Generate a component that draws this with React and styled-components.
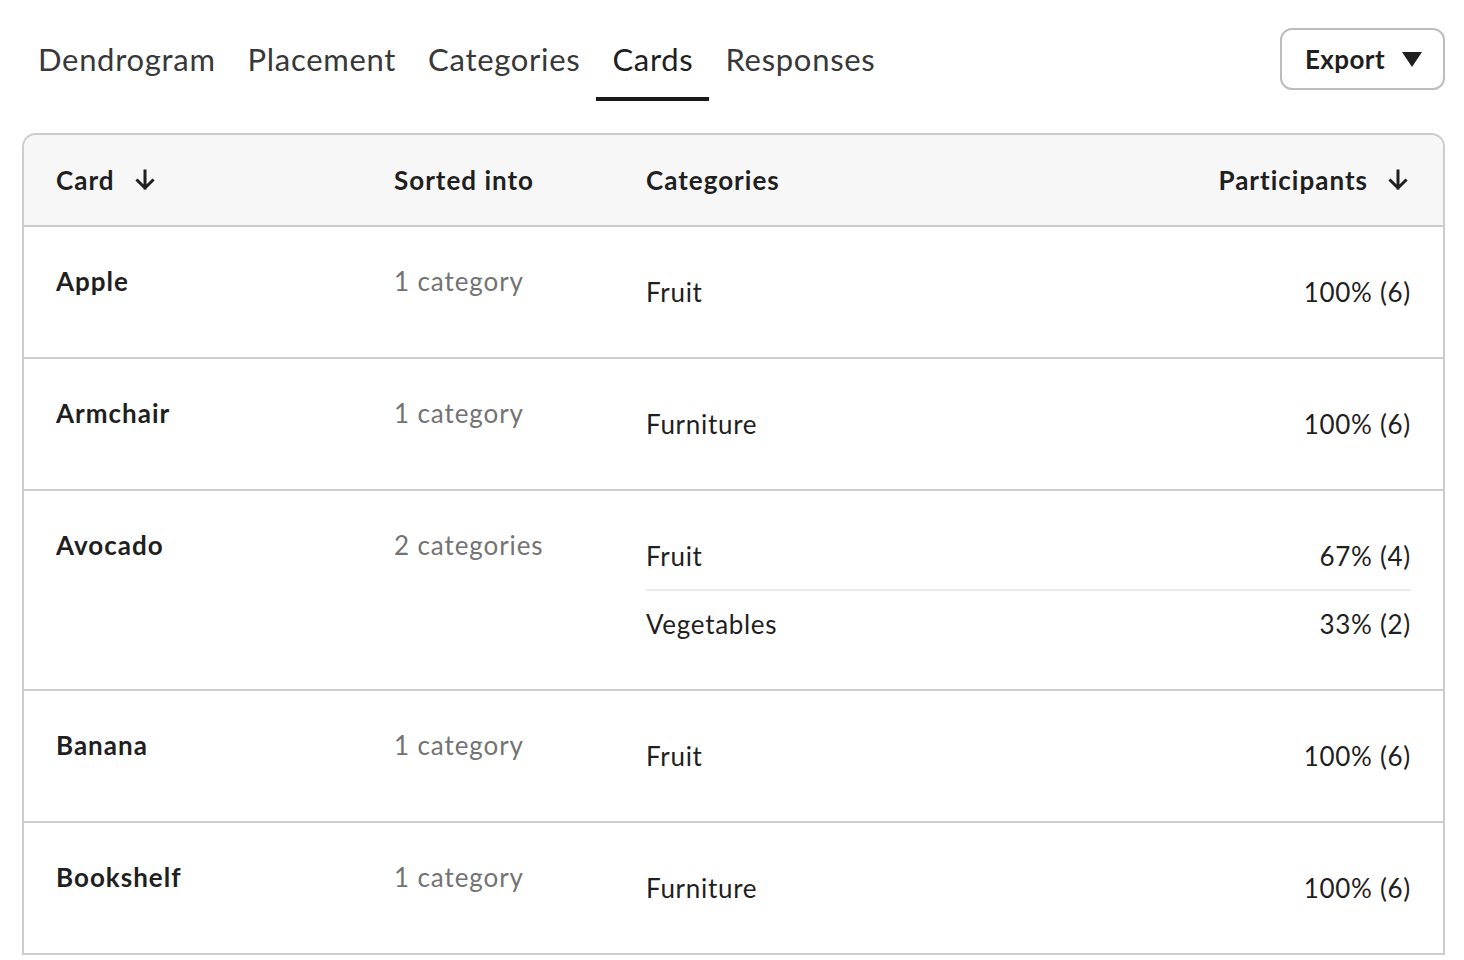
import React from "react";
import styled, { createGlobalStyle } from "styled-components";

const GlobalStyle = createGlobalStyle`
  body {
    margin: 0;
    background: #ffffff;
    font-family: "Lato", "Open Sans", sans-serif;
    color: #1f1f1f;
  }
`;

const tabs = ["Dendrogram", "Placement", "Categories", "Cards", "Responses"];

const cards = [
  { name: "Apple", sorted: "1 category", cats: [["Fruit", "100% (6)"]] },
  { name: "Armchair", sorted: "1 category", cats: [["Furniture", "100% (6)"]] },
  {
    name: "Avocado",
    sorted: "2 categories",
    cats: [
      ["Fruit", "67% (4)"],
      ["Vegetables", "33% (2)"],
    ],
  },
  { name: "Banana", sorted: "1 category", cats: [["Fruit", "100% (6)"]] },
  { name: "Bookshelf", sorted: "1 category", cats: [["Furniture", "100% (6)"]] },
];

function SortArrow() {
  return (
    <svg width="20" height="22" viewBox="0 0 20 22" fill="none">
      <path
        d="M10 2v17M2.5 11.5L10 19l7.5-7.5"
        stroke="#1f1f1f"
        strokeWidth="3"
        strokeLinecap="square"
      />
    </svg>
  );
}

export default function App() {
  return (
    <Page>
      <GlobalStyle />
      <TopBar>
        <Tabs>
          {tabs.map((t) => (
            <Tab key={t} active={t === "Cards"}>
              {t}
            </Tab>
          ))}
        </Tabs>
        <ExportButton>
          Export
          <svg width="20" height="15" viewBox="0 0 20 15">
            <path d="M0 0h20L10 15z" fill="#1f1f1f" />
          </svg>
        </ExportButton>
      </TopBar>

      <TableCard>
        <HeaderRow>
          <HeadCell>
            Card <SortArrow />
          </HeadCell>
          <HeadCell>Sorted into</HeadCell>
          <HeadSplit>
            <HeadCell>Categories</HeadCell>
            <HeadCell trail>
              Participants <SortArrow />
            </HeadCell>
          </HeadSplit>
        </HeaderRow>
        {cards.map((c) => (
          <Row key={c.name}>
            <Name>{c.name}</Name>
            <Sorted>{c.sorted}</Sorted>
            <CatList>
              {c.cats.map(([cat, pct]) => (
                <CatItem key={cat}>
                  <span>{cat}</span>
                  <span>{pct}</span>
                </CatItem>
              ))}
            </CatList>
          </Row>
        ))}
      </TableCard>
    </Page>
  );
}

const Page = styled.div`
  padding: 0 19px 0 22px;
`;

const TopBar = styled.div`
  display: flex;
  justify-content: space-between;
  align-items: flex-start;
`;

const Tabs = styled.div`
  display: flex;
`;

const Tab = styled.div`
  padding: 39px 16px 18px;
  line-height: 40px;
  font-size: 31px;
  letter-spacing: 0.7px;
  color: ${({ active }) => (active ? "#1f1f1f" : "#383838")};
  border-bottom: 4px solid ${({ active }) => (active ? "#1a1a1a" : "transparent")};
`;

const ExportButton = styled.button`
  margin-top: 28px;
  height: 62px;
  width: 165px;
  display: flex;
  align-items: center;
  justify-content: center;
  gap: 17px;
  background: #fff;
  border: 2px solid #bdbdbd;
  border-radius: 12px;
  font-family: inherit;
  font-size: 26px;
  font-weight: 700;
  letter-spacing: 0.4px;
  color: #1f1f1f;
  padding: 0 0 0 2px;
`;

const TableCard = styled.div`
  margin-top: 32px;
  border: 2px solid #cccccc;
  border-bottom: none;
  border-radius: 14px 14px 0 0;
  overflow: hidden;
`;

const grid = `
  display: grid;
  grid-template-columns: 338px 252px 1fr;
  padding: 0 32px;
`;

const HeaderRow = styled.div`
  ${grid}
  height: 90px;
  align-items: center;
  background: #f7f7f7;
  border-bottom: 2px solid #cccccc;
`;

const HeadCell = styled.div`
  display: flex;
  align-items: center;
  gap: 20px;
  font-size: 26px;
  font-weight: 700;
  letter-spacing: 1px;
  color: #1f1f1f;
  margin-right: ${({ trail }) => (trail ? "3px" : "0")};
`;

const HeadSplit = styled.div`
  display: flex;
  justify-content: space-between;
  align-items: center;
`;

const Row = styled.div`
  ${grid}
  padding-top: 32px;
  padding-bottom: 32px;
  border-bottom: 2px solid #cccccc;
  align-items: start;
`;

const Name = styled.div`
  font-size: 26px;
  line-height: 44px;
  font-weight: 700;
  letter-spacing: 1px;
  color: #1f1f1f;
`;

const Sorted = styled.div`
  font-size: 26px;
  line-height: 44px;
  letter-spacing: 0.9px;
  color: #737373;
`;

const CatList = styled.div`
  display: flex;
  flex-direction: column;
`;

const CatItem = styled.div`
  display: flex;
  justify-content: space-between;
  align-items: center;
  height: 66px;
  font-size: 26px;
  letter-spacing: 0.7px;
  color: #1f1f1f;

  & + & {
    border-top: 2px solid #ebebeb;
  }
`;
